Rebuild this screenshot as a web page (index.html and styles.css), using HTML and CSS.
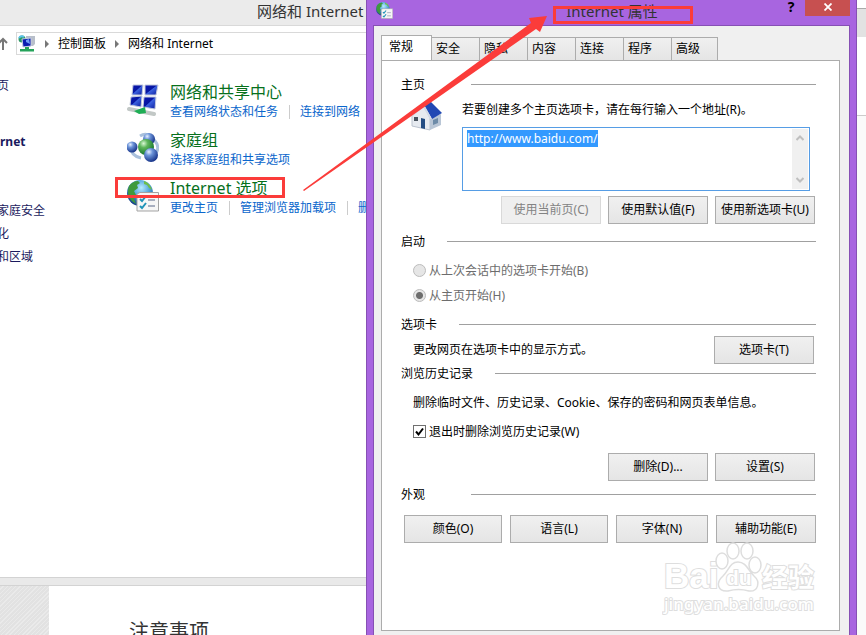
FILE: index.html
```html
<!DOCTYPE html>
<html lang="zh-CN">

<head>
    <meta charset="UTF-8">
    <meta name="viewport" content="width=device-width, initial-scale=1">
    <title>Internet 属性</title>
    <link rel="stylesheet" href="styles.css">
</head>

<body>
    <!-- 公用图标 -->
    <svg class="defs" aria-hidden="true">
        <defs>
            <radialGradient id="blueBall" cx="35%" cy="28%" r="75%">
                <stop offset="0" stop-color="#e6f0ff" />
                <stop offset=".35" stop-color="#6b93d8" />
                <stop offset="1" stop-color="#132f86" />
            </radialGradient>
            <radialGradient id="greenBall" cx="35%" cy="28%" r="75%">
                <stop offset="0" stop-color="#d9f7d4" />
                <stop offset=".35" stop-color="#5db65a" />
                <stop offset="1" stop-color="#12702a" />
            </radialGradient>
            <radialGradient id="sea" cx="55%" cy="30%" r="70%">
                <stop offset="0" stop-color="#b9ecff" />
                <stop offset=".5" stop-color="#4a9fd6" />
                <stop offset="1" stop-color="#153f86" />
            </radialGradient>
            <linearGradient id="screen" x1="0" y1="0" x2="1" y2="1">
                <stop offset="0" stop-color="#0a17b4" />
                <stop offset=".45" stop-color="#0716a0" />
                <stop offset=".5" stop-color="#3c62e0" />
                <stop offset="1" stop-color="#0a1a9c" />
            </linearGradient>
            <symbol id="icon-inet" viewBox="0 0 32 34">
                <circle cx="13" cy="15" r="13" fill="url(#sea)" />
                <path d="M2 8Q6 3 11 3L13 5L10 7L11 10L7 13L9 17L7 21L9 26Q0 21 1 12Z" fill="#3f9a3c" />
                <path d="M17 3Q23 5 25 12L22 10L20 7L17 6Z" fill="#6fbf48" />
                <path d="M11 15.500L13 14.500H31.500V33H10V16Z" fill="#f6f6f6" stroke="#a3a3a3" />
                <path d="M21 22H28M21 28H28" stroke="#8d97ad" stroke-width="1.300" />
                <path d="M13 21L15 23L19 18M13 28L15 30L19 25" fill="none" stroke="#1f93b8" stroke-width="2" />
            </symbol>
        </defs>
    </svg>

    <div class="explorer">
        <header class="explorer-title">网络和 Internet</header>
        <div class="toolbar">
            <svg class="up" viewBox="0 0 8 14"><path d="M3 13V2M-1 6L3 2L7 6" fill="none" stroke="#777" stroke-width="2" /></svg>
            <nav class="address">
                <svg class="address-icon" viewBox="0 0 18 18">
                    <path d="M8 1H17V9L15 11H8Z" fill="#b8bfca" />
                    <circle cx="4" cy="4" r="3.500" fill="#2f9a66" />
                    <path d="M1 3Q3 0 6 2" fill="none" stroke="#5bc2ec" stroke-width="2" />
                    <path d="M4 4L13 3L13 11L5 12Z" fill="#0a1db0" stroke="#c4cbe0" />
                    <path d="M8 5L11 4L12 9L8 7Z" fill="#6f9bf4" />
                    <path d="M7 12V14H2V16.500H16V14H11V12Z" fill="#25a35a" />
                </svg>
                <span class="sep"></span>
                <a href="#">控制面板</a>
                <span class="sep"></span>
                <a href="#">网络和 Internet</a>
            </nav>
        </div>

        <div class="explorer-body">
            <aside class="side">
                <a class="side-home" href="#">页</a>
                <a class="side-current" href="#">rnet</a>
                <a class="side-link" href="#">家庭安全</a>
                <a class="side-link" href="#">化</a>
                <a class="side-link" href="#">和区域</a>
            </aside>
            <main class="items">
                <section class="item">
                    <svg class="item-icon" viewBox="0 0 32 34">
                        <g fill="url(#screen)" stroke="#c3cade">
                            <path d="M6 3L16 3L15 13L5 13Z" />
                            <path d="M18 3L31 3L29 13L18 13Z" />
                            <path d="M4 15L15 14L14 25L3 23Z" />
                            <path d="M17 15L29 15L28 27L16 25Z" />
                        </g>
                        <path d="M2 27L27 32" stroke="#c2c8c6" stroke-width="4" stroke-linecap="round" />
                        <path d="M7 29L18 25L19 31L12 32Z" fill="#1fae55" />
                    </svg>
                    <div>
                        <h2><a href="#">网络和共享中心</a></h2>
                        <p class="tasks"><a href="#">查看网络状态和任务</a><a href="#">连接到网络</a></p>
                    </div>
                </section>
                <section class="item">
                    <svg class="item-icon" viewBox="0 0 32 34">
                        <path d="M13 6Q21 1 28 11Q33 17 29 23M3 16Q4 26 14 28" fill="none" stroke="#a9c0dc" stroke-width="3" />
                        <circle cx="22" cy="9" r="6" fill="url(#blueBall)" />
                        <circle cx="5" cy="17" r="5.500" fill="url(#blueBall)" />
                        <circle cx="19" cy="17" r="8" fill="url(#greenBall)" />
                        <circle cx="24" cy="25" r="7" fill="url(#blueBall)" />
                    </svg>
                    <div>
                        <h2><a href="#">家庭组</a></h2>
                        <p class="tasks"><a href="#">选择家庭组和共享选项</a></p>
                    </div>
                </section>
                <section class="item">
                    <svg class="item-icon"><use href="#icon-inet" /></svg>
                    <div>
                        <h2><a href="#">Internet 选项</a></h2>
                        <p class="tasks"><a href="#">更改主页</a><a href="#">管理浏览器加载项</a><a href="#">删除</a></p>
                    </div>
                </section>
            </main>
        </div>

        <footer class="below">
            <div class="below-side"></div>
            <h3>注意事项</h3>
        </footer>
    </div>

    <div class="backdrop">
        <div class="backdrop-bar"></div>
        <div class="backdrop-card"></div>
    </div>

    <!-- Internet 属性窗口 -->
    <div class="dialog">
        <header class="dialog-title">
            <svg class="dialog-icon"><use href="#icon-inet" /></svg>
            <h1>Internet 属性</h1>
            <button class="help" type="button">?</button>
            <button class="close" type="button" aria-label="关闭">
                <svg viewBox="0 0 8 8"><path d="M.5 .5L7.500 7.500M7.500 .5L.5 7.500" stroke="#fff" stroke-width="1.800" /></svg>
            </button>
        </header>
        <div class="client">
            <div class="tabs">
                <button class="tab active" type="button">常规</button>
                <button class="tab" type="button">安全</button>
                <button class="tab" type="button">隐私</button>
                <button class="tab" type="button">内容</button>
                <button class="tab" type="button">连接</button>
                <button class="tab" type="button">程序</button>
                <button class="tab" type="button">高级</button>
            </div>
            <form class="panel">
                <section class="group">
                    <h2 class="group-head wide">主页</h2>
                    <div class="home">
                        <svg class="home-icon" viewBox="0 0 32 32">
                            <path d="M2 15L13 4L20 18V30L2 26Z" fill="#e6eaf0" stroke="#b9c2ce" />
                            <path d="M20 18L31 14V25L20 30Z" fill="#b9c6d6" />
                            <path d="M13 3L20 1L32 13L22 19Z" fill="#2148b4" />
                            <path d="M13 3L1 15L2 17L13 7L20 19L22 19Z" fill="#d3dae6" />
                            <path d="M4 17H8V21H4Z" fill="#47525e" />
                            <path d="M11 18L15 19V29L11 28Z" fill="#234c83" />
                            <path d="M23 20L28 18V23L23 25Z" fill="#6d8ba8" />
                        </svg>
                        <div class="home-main">
                            <label for="homeUrls">若要创建多个主页选项卡，请在每行输入一个地址(R)。</label>
                            <div class="urls">
                                <textarea id="homeUrls" spellcheck="false">http://www.baidu.com/</textarea>
                                <div class="scroll">
                                    <svg viewBox="0 0 8 6"><path d="M.5 5L4 1.500L7.500 5" /></svg>
                                    <svg viewBox="0 0 8 6"><path d="M.5 1L4 4.500L7.500 1" /></svg>
                                </div>
                            </div>
                        </div>
                    </div>
                    <div class="buttons">
                        <button type="button" disabled>使用当前页(C)</button>
                        <button type="button">使用默认值(F)</button>
                        <button type="button">使用新选项卡(U)</button>
                    </div>
                </section>

                <section class="group">
                    <h2 class="group-head">启动</h2>
                    <div class="radios">
                        <label><input type="radio" name="start" disabled>从上次会话中的选项卡开始(B)</label>
                        <label><input type="radio" name="start" checked disabled>从主页开始(H)</label>
                    </div>
                </section>

                <section class="group">
                    <h2 class="group-head">选项卡</h2>
                    <div class="tab-options">
                        <p>更改网页在选项卡中的显示方式。</p>
                        <button type="button">选项卡(T)</button>
                    </div>
                </section>

                <section class="group">
                    <h2 class="group-head">浏览历史记录</h2>
                    <div class="history">
                        <p>删除临时文件、历史记录、Cookie、保存的密码和网页表单信息。</p>
                        <label><input type="checkbox" checked>退出时删除浏览历史记录(W)</label>
                    </div>
                    <div class="buttons">
                        <button type="button">删除(D)...</button>
                        <button type="button">设置(S)</button>
                    </div>
                </section>

                <section class="group">
                    <h2 class="group-head wide">外观</h2>
                    <div class="looks">
                        <button type="button">颜色(O)</button>
                        <button type="button">语言(L)</button>
                        <button type="button">字体(N)</button>
                        <button type="button">辅助功能(E)</button>
                    </div>
                </section>
            </form>
        </div>
    </div>

    <!-- 标注 -->
    <div class="mark mark-item"></div>
    <div class="mark mark-title"></div>
    <svg class="arrow" viewBox="0 0 250 180"><path d="M1 176L229 9L227 4L245 2L238 18L234 15L2 177Z" fill="#fb3c3a" /></svg>

    <!-- 水印 -->
    <svg class="watermark" viewBox="0 0 160 76">
        <g fill="#fff" stroke="#dedede" stroke-width="1.500">
            <text class="wm-logo" x="2" y="46">Bai</text>
            <ellipse cx="60" cy="19" rx="6" ry="8" />
            <ellipse cx="71" cy="9" rx="6" ry="8" />
            <ellipse cx="85" cy="9" rx="6" ry="8" />
            <ellipse cx="93" cy="23" rx="6" ry="8" />
            <path d="M76 20C84 20 86 28 92 34C99 40 96 50 87 49C80 47 73 47 66 49C56 50 53 41 61 34C67 28 68 20 76 20Z" />
            <text class="wm-du" x="64" y="43">du</text>
            <text class="wm-cn" x="100" y="45">经验</text>
            <text class="wm-url" x="2" y="68">jingyan.baidu.com</text>
        </g>
    </svg>

    <script>
        var urls = document.getElementById("homeUrls");
        urls.focus();
        urls.select();
    </script>
</body>

</html>
```
FILE: styles.css
```css
* {
    box-sizing: border-box;
}

body {
    position: relative;
    margin: 0;
    height: 100vh;
    min-height: 635px;
    overflow: hidden;
    background-color: #fff;
    color: #000;
    font: 12px/18px "Noto Sans", "Noto Sans CJK SC", sans-serif;
}

h1, h2, h3, p {
    margin: 0;
    font-size: 12px;
    font-weight: normal;
}

a {
    text-decoration: none;
    color: inherit;
}

button, textarea {
    font: inherit;
    color: inherit;
}

input {
    margin: 0;
}

.defs {
    position: absolute;
    width: 0;
    height: 0;
}

/* 控制面板 */
.explorer {
    display: flex;
    flex-direction: column;
    height: 100%;
    white-space: nowrap;
}

.explorer-title {
    height: 26px;
    padding-left: 257px;
    border-bottom: 1px solid #d9d9d9;
    background-color: #ebebeb;
    color: #333;
    font-size: 15px;
    line-height: 22px;
}

.toolbar {
    display: flex;
    align-items: center;
    gap: 8px;
    padding-top: 6px;
}

.up {
    width: 8px;
    height: 14px;
}

.address {
    display: flex;
    flex: 1;
    align-items: center;
    gap: 9px;
    height: 23px;
    padding-left: 1px;
    border: 1px solid #d9d9d9;
}

.address-icon {
    width: 18px;
    height: 18px;
}

.sep {
    border: 4px solid transparent;
    border-left-color: #777;
    border-right-width: 0;
}

.explorer-body {
    display: flex;
    flex: 1;
}

.side {
    display: flex;
    flex-direction: column;
    width: 127px;
    padding-top: 22px;
    color: #1a1a5e;
}

.side-home {
    margin-left: -3px;
    margin-bottom: 38px;
}

.side-current {
    margin-bottom: 51px;
    font-weight: bold;
}

.side-link {
    margin-left: -3px;
    margin-bottom: 5px;
}

.items {
    display: flex;
    flex-direction: column;
    gap: 8px;
    padding-top: 27px;
}

.item {
    display: flex;
    gap: 11px;
    height: 40px;
}

.item-icon {
    width: 32px;
    height: 34px;
}

.item h2 {
    color: #06701c;
    font-size: 16px;
    line-height: 20px;
}

.tasks {
    display: flex;
    color: #0a66cc;
    line-height: 20px;
}

.tasks a + a {
    margin-left: 11px;
    padding-left: 11px;
    background: linear-gradient(#ccc, #ccc) 0 3px / 1px 14px no-repeat;
}

.below {
    display: flex;
    height: 58px;
    border-top: 1px solid #d3d3d3;
    box-shadow: inset 0 7px #e9e9e9, inset 0 8px #d3d3d3;
}

.below-side {
    width: 49px;
    margin-top: 8px;
    background: repeating-linear-gradient(135deg, #e2e2e2 0 2px, #eaeaea 2px 3px);
}

.below h3 {
    margin-left: 80px;
    padding-top: 39px;
    color: #333;
    font-size: 20px;
    line-height: 30px;
}

/* 右侧露出的背景页 */
.backdrop {
    position: absolute;
    top: 0;
    right: 0;
    bottom: 0;
    width: 9px;
    background-color: #fafafa;
}

.backdrop-bar {
    height: 37px;
    background: linear-gradient(#fff 8px, #aaa 8px 9px, #e2e2e2 9px);
}

.backdrop-card {
    height: 79px;
    border-bottom: 1px solid #ccc;
    background-color: #fff;
}

/* Internet 属性 */
.dialog {
    position: absolute;
    top: 0;
    left: 366px;
    right: 9px;
    bottom: 0;
    display: flex;
    flex-direction: column;
    padding: 0 6px;
    border: solid #8650b4;
    border-width: 0 1px;
    background-color: #a865e0;
}

.dialog-title {
    display: flex;
    align-items: flex-start;
    height: 25px;
}

.dialog-icon {
    width: 17px;
    height: 18px;
    margin: 1px 0 0 3px;
}

.dialog-title h1 {
    flex: 1;
    padding-left: 50px;
    color: #333;
    font-size: 15px;
    line-height: 22px;
    text-align: center;
}

.help {
    width: 20px;
    height: 14px;
    padding: 0;
    border: 0;
    background: none;
    font-size: 14px;
    font-weight: bold;
    line-height: 14px;
}

.close {
    width: 45px;
    height: 16px;
    margin-left: 4px;
    padding: 0 0 3px;
    border: 0;
    background-color: #c75050;
}

.close svg {
    display: block;
    width: 8px;
    height: 8px;
    margin: 0 auto;
}

.client {
    display: flex;
    flex: 1;
    flex-direction: column;
    padding: 9px 9px 4px 7px;
    border: solid #8650b4;
    border-width: 1px 1px 0;
    background-color: #f0f0f0;
}

.tabs {
    display: flex;
    align-items: flex-end;
    height: 25px;
}

.tab {
    width: 48px;
    height: 23px;
    padding: 0 0 0 4px;
    border: 1px solid #acacac;
    border-left-width: 0;
    border-bottom: 0;
    background: linear-gradient(#f0f0f0, #e5e5e5);
    text-align: left;
}

.tab:last-child {
    width: 46px;
}

.tab.active {
    width: 51px;
    height: 26px;
    margin-bottom: -1px;
    padding: 0 0 3px 7px;
    border-left-width: 1px;
    background: #fff;
}

.panel {
    flex: 1;
    padding: 14px 23px 0 19px;
    border: 1px solid #acacac;
    background-color: #fff;
}

.group {
    display: flex;
    flex-direction: column;
}

.group-head {
    display: flex;
    align-items: center;
    gap: 22px;
    height: 19px;
}

.group-head.wide {
    gap: 46px;
}

.group-head::after {
    content: "";
    flex: 1;
    border-top: 1px solid #a0a0a0;
}

.group button {
    height: 28px;
    padding: 0;
    border: 1px solid #acacac;
    background: linear-gradient(#f0f0f0, #e5e5e5);
}

.group button:disabled {
    border-color: #d9d9d9;
    background: #efefef;
    color: #838383;
}

.home {
    display: flex;
    gap: 20px;
    padding: 6px 6px 5px 9px;
}

.home-icon {
    width: 32px;
    height: 32px;
}

.home-main {
    flex: 1;
}

.home-main label {
    display: block;
    height: 27px;
    line-height: 20px;
}

.urls {
    display: flex;
    height: 64px;
    padding: 1px;
    border: 1px solid #569de5;
}

.urls textarea {
    flex: 1;
    min-width: 0;
    padding: 1px 3px;
    border: 0;
    outline: 0;
    resize: none;
    overflow: hidden;
    background: none;
    line-height: 17px;
}

.urls textarea::selection {
    background-color: #3399ff;
    color: #fff;
}

.scroll {
    display: flex;
    flex-direction: column;
    align-items: center;
    justify-content: space-between;
    width: 16px;
    padding: 6px 0;
    background-color: #f0f0f0;
}

.scroll svg {
    width: 8px;
    height: 6px;
    fill: none;
    stroke: #bfbfbf;
    stroke-width: 2;
}

.buttons {
    display: flex;
    justify-content: flex-end;
    gap: 7px;
    padding: 0 1px 4px 0;
}

.home + .buttons {
    padding-bottom: 8px;
}

.buttons button,
.tab-options button {
    width: 100px;
}

.radios {
    padding: 7px 0 7px 12px;
    color: #6d6d6d;
}

.radios label,
.history label {
    display: flex;
    align-items: center;
    gap: 3px;
    height: 25px;
}

.radios input {
    appearance: none;
    width: 13px;
    height: 13px;
    border: 1px solid #bcbcbc;
    border-radius: 50%;
    background-color: #e6e6e6;
}

.radios input:checked {
    background-image: radial-gradient(circle, #6d6d6d 3px, transparent 4px);
}

.tab-options {
    display: flex;
    align-items: center;
    justify-content: space-between;
    height: 30px;
    padding: 2px 2px 0 12px;
}

.history {
    padding: 7px 0 9px 12px;
}

.history p {
    height: 29px;
    line-height: 26px;
}

.history input {
    appearance: none;
    width: 13px;
    height: 13px;
    border: 1px solid #707070;
    background-color: #fff;
}

.history input:checked {
    background-image: url("data:image/svg+xml,%3Csvg xmlns='http://www.w3.org/2000/svg' viewBox='0 0 11 11'%3E%3Cpath d='M2 5.500L4.500 8.500L9 2.500' fill='none' stroke='%23000' stroke-width='2'/%3E%3C/svg%3E");
}

.looks {
    display: grid;
    grid-template-columns: 98fr 98fr 92fr 100fr;
    gap: 8px;
    padding: 11px 0 0 3px;
}

/* 标注 */
.mark {
    position: absolute;
    border: 3px solid #fb3c3a;
}

.mark-item {
    top: 177px;
    left: 115px;
    width: 170px;
    height: 21px;
}

.mark-title {
    top: 6px;
    left: 553px;
    width: 140px;
    height: 18px;
}

.arrow {
    position: absolute;
    top: 14px;
    left: 302px;
    width: 250px;
    height: 180px;
    pointer-events: none;
}

.watermark {
    position: absolute;
    top: 542px;
    left: 662px;
    width: 160px;
    height: 76px;
    pointer-events: none;
}

.watermark text {
    font-family: "Liberation Sans", "Noto Sans CJK SC", sans-serif;
    font-weight: bold;
    paint-order: stroke;
    stroke-width: 2px;
}

.wm-logo {
    font-size: 35px;
}

.watermark .wm-du {
    font-size: 21px;
}

.wm-cn {
    font-size: 26px;
}

.watermark .wm-url {
    font-family: "Noto Sans", sans-serif;
    font-size: 17px;
    font-weight: 500;
}
```
